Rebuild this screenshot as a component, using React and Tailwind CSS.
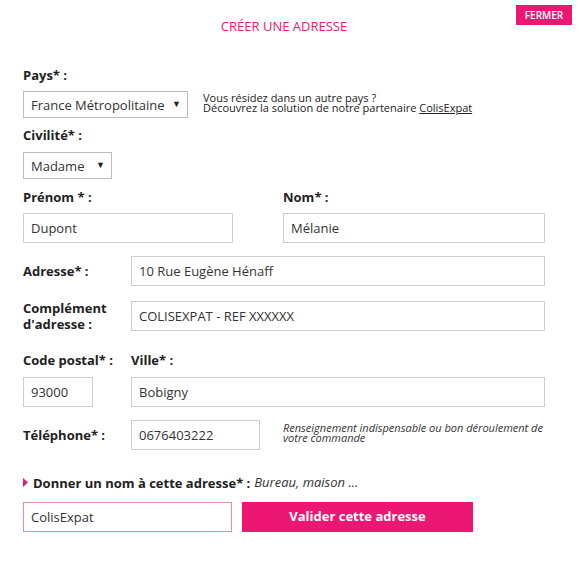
const pink = "bg-[#ec1773]";

function Label({ children, className = "" }) {
    return <span className={`text-[13px] font-bold text-[#222] leading-[16px] ${className}`}>{children}</span>;
}

function TextInput({ value, className = "" }) {
    return (
        <input
            type="text"
            defaultValue={value}
            className={`h-[30px] border border-[#cfcfcf] px-[7px] text-[13px] text-[#333] outline-none ${className}`}
        />
    );
}

function Select({ value, className = "" }) {
    return (
        <div className={`relative h-[27px] border border-[#bdbdbd] bg-white ${className}`}>
            <select
                defaultValue={value}
                className="h-full w-full appearance-none bg-transparent pl-[7px] text-[13px] text-[#333] outline-none"
            >
                <option>{value}</option>
            </select>
            <span className="pointer-events-none absolute right-[6px] top-[7px] text-[9px] leading-[10px] text-[#222]">▼</span>
        </div>
    );
}

export default function App() {
    return (
        <div className="relative w-[584px] h-[561px] bg-white font-['Open_Sans',sans-serif] text-[#333]">
            <button className={`absolute right-[12px] top-[5px] h-[20px] w-[56px] ${pink} text-[10px] font-semibold text-white`}>
                FERMER
            </button>

            <h1 className="w-[568px] pt-[18px] text-center text-[13px] leading-[16px] text-[#ec1773]">CRÉER UNE ADRESSE</h1>

            <form className="flex flex-col pl-[23px] w-[545px]">
                <Label className="mt-[33px]">Pays* :</Label>
                <div className="mt-[8px] flex items-center gap-[15px]">
                    <Select value="France Métropolitaine" className="w-[165px]" />
                    <p className="text-[11px] leading-[10px] text-[#222] -mt-[4px] whitespace-nowrap">
                        Vous résidez dans un autre pays ?<br />
                        Découvrez la solution de notre partenaire <span className="underline">ColisExpat</span>
                    </p>
                </div>

                <Label className="mt-[9px]">Civilité* :</Label>
                <Select value="Madame" className="mt-[9px] w-[89px]" />

                <div className="mt-[10px] flex">
                    <div className="flex w-[260px] flex-col">
                        <Label>Prénom * :</Label>
                        <TextInput value="Dupont" className="mt-[8px] w-[210px]" />
                    </div>
                    <div className="flex flex-1 flex-col">
                        <Label>Nom* :</Label>
                        <TextInput value="Mélanie" className="mt-[8px] w-[262px]" />
                    </div>
                </div>

                <div className="mt-[13px] flex items-center">
                    <Label className="w-[108px]">Adresse* :</Label>
                    <TextInput value="10 Rue Eugène Hénaff" className="w-[414px]" />
                </div>

                <div className="mt-[14px] flex items-center">
                    <Label className="w-[108px] leading-[13px]">Complément<br />d'adresse :</Label>
                    <TextInput value="COLISEXPAT - REF XXXXXX" className="w-[414px]" />
                </div>

                <div className="mt-[20px] flex">
                    <Label className="w-[108px]">Code postal* :</Label>
                    <Label>Ville* :</Label>
                </div>
                <div className="mt-[9px] flex">
                    <TextInput value="93000" className="w-[70px]" />
                    <TextInput value="Bobigny" className="ml-[38px] w-[414px]" />
                </div>

                <div className="mt-[13px] flex items-center">
                    <Label className="w-[108px]">Téléphone* :</Label>
                    <TextInput value="0676403222" className="w-[129px]" />
                    <p className="ml-[23px] -mt-[4px] whitespace-nowrap text-[11px] italic leading-[10px] text-[#333]">
                        Renseignement indispensable ou bon déroulement de<br />votre commande
                    </p>
                </div>

                <div className="mt-[23px] flex items-center">
                    <svg width="5" height="9" viewBox="0 0 5 9" className="mr-[5px]">
                        <polygon points="0,0 5,4.5 0,9" fill="#ec1773" />
                    </svg>
                    <Label>Donner un nom à cette adresse* :</Label>
                    <span className="ml-[4px] text-[13px] italic text-[#333]">Bureau, maison ...</span>
                </div>

                <div className="mt-[9px] flex items-center">
                    <TextInput value="ColisExpat" className="w-[209px] border-[#e38bb4]" />
                    <button type="button" className={`ml-[10px] h-[30px] w-[231px] ${pink} text-[13px] font-bold text-white`}>
                        Valider cette adresse
                    </button>
                </div>
            </form>
        </div>
    );
}
